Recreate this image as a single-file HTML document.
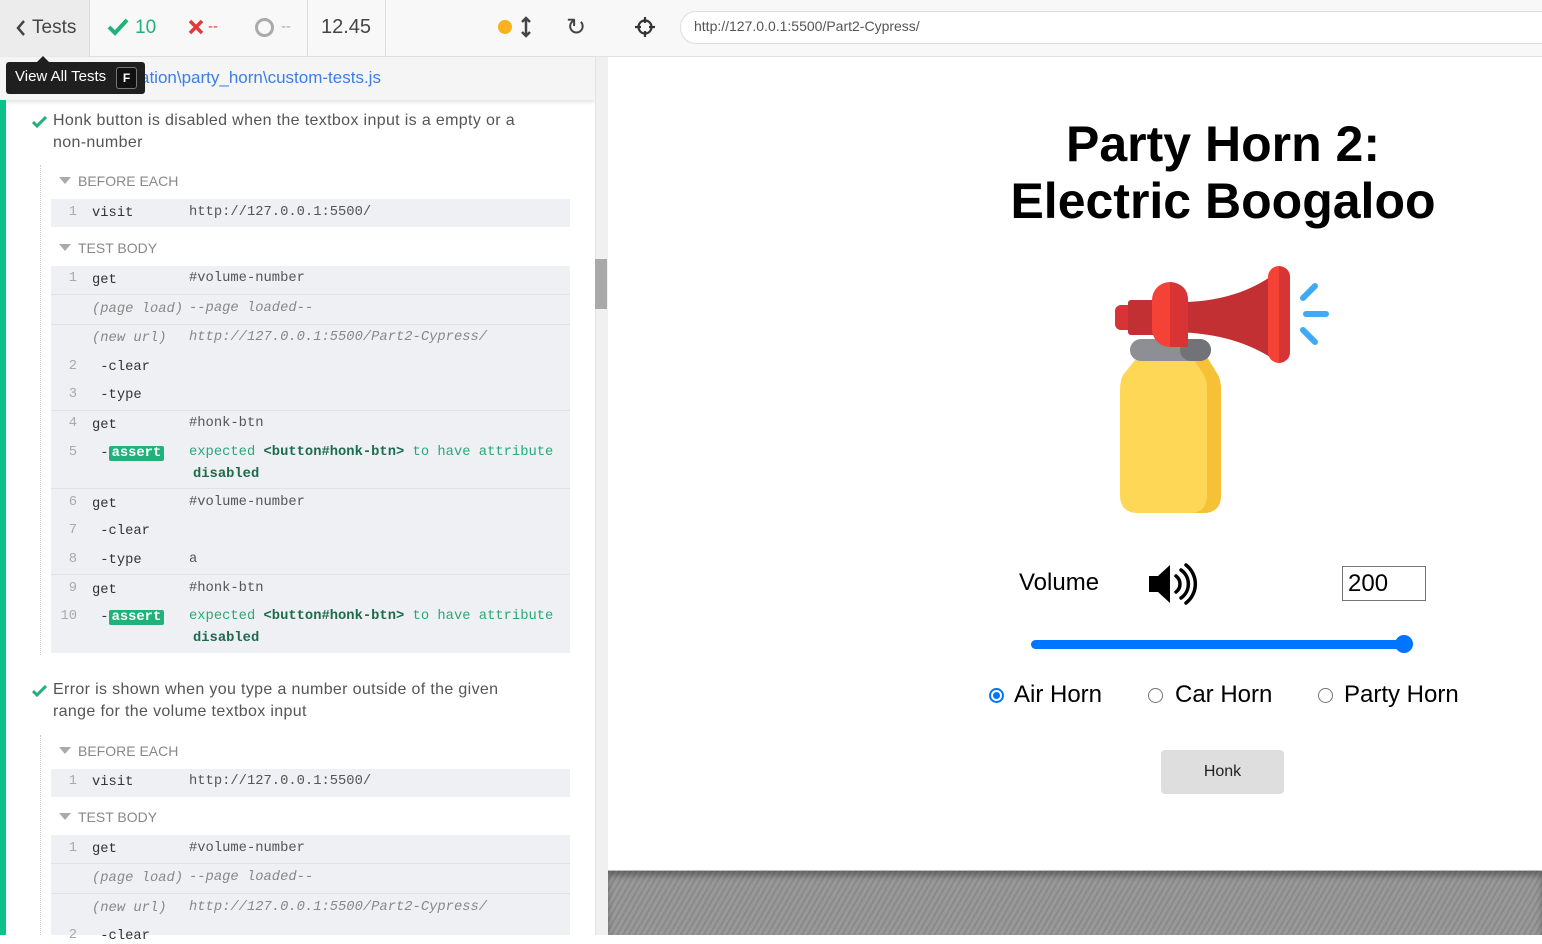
<!DOCTYPE html>
<html><head><meta charset="utf-8"><style>
*{margin:0;padding:0;box-sizing:border-box}
body{width:1542px;height:935px;overflow:hidden;position:relative;background:#fff;font-family:"Liberation Sans",sans-serif}
.a{position:absolute}
.top{left:0;top:0;width:608px;height:57px;background:#f8f8f8;border-bottom:1px solid #e2e2e2}
.mono{font-family:"Liberation Mono","DejaVu Sans Mono",monospace;font-size:13.8px;white-space:nowrap}
.box{left:51px;width:519px;background:#eef0f3}
.sep{left:51px;width:519px;height:1px;background:#dfe2e6}
.n{color:#aaa;width:26px;text-align:right;left:51px}
.c{left:92px;color:#333}
.m{left:189px;color:#555}
.it{font-style:italic;color:#888}
.hd{left:59px;color:#888;font-size:14px}
.hd:before{content:"";display:inline-block;border-left:6px solid transparent;border-right:6px solid transparent;border-top:7px solid #aaa;margin-right:7px;vertical-align:2px}
.as{background:#1fb27a;color:#fff;font-weight:bold;padding:0 3px;border-radius:2px}
.gr{color:#2aa876}
.title{left:53px;color:#555;font-size:16px;letter-spacing:.35px;line-height:22px;white-space:nowrap}
.chk{left:32px}
</style></head><body>
<div class="a top"></div>
<div class="a" style="left:0;top:0;width:90px;height:57px;background:#ececec;border-right:1px solid #ddd"></div>
<svg class="a" style="left:15px;top:19px" width="12" height="18" viewBox="0 0 12 18"><path d="M9 2L3 9l6 7" fill="none" stroke="#444" stroke-width="2.5"/></svg>
<div class="a" style="left:32px;top:17px;font-size:19px;color:#444">Tests</div>
<div class="a" style="left:307px;top:0;width:1px;height:57px;background:#ddd"></div>
<div class="a" style="left:385px;top:0;width:1px;height:57px;background:#ddd"></div>
<svg class="a" style="left:107px;top:18px" width="22" height="18" viewBox="0 0 22 18"><path d="M2 9l6 6L20 2" fill="none" stroke="#1fb27a" stroke-width="4"/></svg>
<div class="a" style="left:135px;top:17px;font-size:19px;color:#1fb27a">10</div>
<svg class="a" style="left:188px;top:19px" width="16" height="16" viewBox="0 0 16 16"><path d="M2 2l12 12M14 2L2 14" stroke="#e03a3a" stroke-width="3.5"/></svg>
<div class="a" style="left:208px;top:18px;color:#e03a3a;font-size:15px">--</div>
<div class="a" style="left:255px;top:18px;width:19px;height:19px;border:3px solid #aaa;border-radius:50%"></div>
<div class="a" style="left:281px;top:18px;color:#aaa;font-size:15px">--</div>
<div class="a" style="left:321px;top:16px;font-size:20px;color:#444">12.45</div>
<div class="a" style="left:498px;top:20px;width:14px;height:14px;border-radius:50%;background:#f9b21e"></div>
<svg class="a" style="left:520px;top:16px" width="12" height="22" viewBox="0 0 12 22"><path d="M6 3v16M2 6l4-4 4 4M2 16l4 4 4-4" fill="none" stroke="#444" stroke-width="2.5"/></svg>
<div class="a" style="left:566px;top:13px;font-size:24px;color:#444">&#8635;</div>
<div class="a" style="left:0;top:57px;width:595px;height:43px;background:#f5f5f5;box-shadow:0 2px 4px rgba(0,0,0,.12)"></div>
<div class="a" style="left:140px;top:68px;color:#3b7ee8;font-size:17px">ation\party_horn\custom-tests.js</div>
<div class="a" style="left:6px;top:62px;width:139px;height:32px;background:#1f1f1f;border-radius:3px"></div>
<div class="a" style="left:37px;top:56px;border-left:6px solid transparent;border-right:6px solid transparent;border-bottom:6px solid #1f1f1f"></div>
<div class="a" style="left:15px;top:68px;color:#fff;font-size:15px">View All Tests</div>
<div class="a" style="left:116px;top:67px;width:21px;height:22px;border:1px solid #777;border-radius:3px;background:#111;color:#fff;font-size:12px;font-weight:bold;text-align:center;line-height:20px">F</div>
<div class="a" style="left:0;top:100px;width:6px;height:835px;background:#0cc28a"></div>
<div class="a" style="left:595px;top:57px;width:13px;height:878px;background:#f0f0f0;border-left:1px solid #e4e4e4"></div>
<div class="a" style="left:595px;top:259px;width:12px;height:50px;background:#a9a9a9"></div>
<div class="a" style="left:40px;top:165px;width:0;height:490px;border-left:1px dotted #ccc"></div>
<div class="a" style="left:40px;top:735px;width:0;height:200px;border-left:1px dotted #ccc"></div>

<svg class="a chk" style="top:116px" width="15" height="12" viewBox="0 0 15 12"><path d="M1 6l4 4 9-9" fill="none" stroke="#1fb27a" stroke-width="3"/></svg>
<div class="a title" style="top:110px">Honk button is disabled when the textbox input is a empty or a<br>non-number</div>
<div class="a hd" style="top:173px">BEFORE EACH</div>
<div class="a box" style="top:199px;height:28px"></div>
<div class="a mono n" style="top:205px">1</div><div class="a mono c" style="top:206px">visit</div><div class="a mono m" style="top:205px">http://127.0.0.1:5500/</div>
<div class="a hd" style="top:240px">TEST BODY</div>
<div class="a box" style="top:266px;height:387px"></div>
<div class="a sep" style="top:294px"></div><div class="a sep" style="top:324px"></div><div class="a sep" style="top:410px"></div><div class="a sep" style="top:488px"></div><div class="a sep" style="top:574px"></div>
<div class="a mono n" style="top:271px">1</div><div class="a mono c" style="top:273px">get</div><div class="a mono m" style="top:271px">#volume-number</div>
<div class="a mono c it" style="top:302px">(page load)</div><div class="a mono m it" style="top:301px">--page loaded--</div>
<div class="a mono c it" style="top:331px">(new url)</div><div class="a mono m it" style="top:330px">http://127.0.0.1:5500/Part2-Cypress/</div>
<div class="a mono n" style="top:359px">2</div><div class="a mono c" style="top:360px">&nbsp;-clear</div>
<div class="a mono n" style="top:387px">3</div><div class="a mono c" style="top:388px">&nbsp;-type</div>
<div class="a mono n" style="top:416px">4</div><div class="a mono c" style="top:418px">get</div><div class="a mono m" style="top:416px">#honk-btn</div>
<div class="a mono n" style="top:445px">5</div><div class="a mono c" style="top:446px">&nbsp;-<span class="as">assert</span></div><div class="a mono m gr" style="top:445px">expected <b style="color:#1d6b4d">&lt;button#honk-btn&gt;</b> to have attribute</div>
<div class="a mono" style="left:193px;top:467px;color:#1d6b4d;font-weight:bold">disabled</div>
<div class="a mono n" style="top:495px">6</div><div class="a mono c" style="top:497px">get</div><div class="a mono m" style="top:495px">#volume-number</div>
<div class="a mono n" style="top:523px">7</div><div class="a mono c" style="top:524px">&nbsp;-clear</div>
<div class="a mono n" style="top:552px">8</div><div class="a mono c" style="top:553px">&nbsp;-type</div><div class="a mono m" style="top:552px">a</div>
<div class="a mono n" style="top:581px">9</div><div class="a mono c" style="top:583px">get</div><div class="a mono m" style="top:581px">#honk-btn</div>
<div class="a mono n" style="top:609px">10</div><div class="a mono c" style="top:610px">&nbsp;-<span class="as">assert</span></div><div class="a mono m gr" style="top:609px">expected <b style="color:#1d6b4d">&lt;button#honk-btn&gt;</b> to have attribute</div>
<div class="a mono" style="left:193px;top:631px;color:#1d6b4d;font-weight:bold">disabled</div>

<svg class="a chk" style="top:685px" width="15" height="12" viewBox="0 0 15 12"><path d="M1 6l4 4 9-9" fill="none" stroke="#1fb27a" stroke-width="3"/></svg>
<div class="a title" style="top:679px">Error is shown when you type a number outside of the given<br>range for the volume textbox input</div>
<div class="a hd" style="top:743px">BEFORE EACH</div>
<div class="a box" style="top:769px;height:28px"></div>
<div class="a mono n" style="top:774px">1</div><div class="a mono c" style="top:775px">visit</div><div class="a mono m" style="top:774px">http://127.0.0.1:5500/</div>
<div class="a hd" style="top:809px">TEST BODY</div>
<div class="a box" style="top:835px;height:100px"></div>
<div class="a sep" style="top:863px"></div><div class="a sep" style="top:893px"></div>
<div class="a mono n" style="top:841px">1</div><div class="a mono c" style="top:842px">get</div><div class="a mono m" style="top:841px">#volume-number</div>
<div class="a mono c it" style="top:871px">(page load)</div><div class="a mono m it" style="top:870px">--page loaded--</div>
<div class="a mono c it" style="top:901px">(new url)</div><div class="a mono m it" style="top:900px">http://127.0.0.1:5500/Part2-Cypress/</div>
<div class="a mono n" style="top:928px">2</div><div class="a mono c" style="top:929px">&nbsp;-clear</div>

<div class="a" style="left:608px;top:0;width:934px;height:57px;background:#f8f8f8;border-bottom:1px solid #e2e2e2"></div>
<svg class="a" style="left:634px;top:16px" width="22" height="22" viewBox="0 0 22 22"><circle cx="11" cy="11" r="6.5" fill="none" stroke="#333" stroke-width="2.2"/><path d="M11 1v6M11 15v6M1 11h6M15 11h6" stroke="#333" stroke-width="2.2"/></svg>
<div class="a" style="left:680px;top:11px;width:880px;height:33px;background:#fff;border:1px solid #ddd;border-radius:16px"></div>
<div class="a" style="left:694px;top:18px;font-size:14px;color:#555">http://127.0.0.1:5500/Part2-Cypress/</div>
<div class="a" style="left:608px;top:871px;width:934px;height:64px;background:repeating-linear-gradient(-60deg,#8a8a8a 0 2px,#999 2px 5px);box-shadow:inset 0 5px 6px rgba(0,0,0,.3)"></div>
<div class="a" style="left:608px;top:870px;width:934px;height:1px;background:#bbb"></div>

<div class="a" style="left:908px;top:116px;width:630px;text-align:center;font-size:50px;font-weight:bold;line-height:57px;color:#000">Party Horn 2:<br>Electric Boogaloo</div>
<svg class="a" style="left:1110px;top:262px" width="225" height="255" viewBox="0 0 225 255">
<path d="M30 92 L95 92 L108 113 Q111 119 111 128 L111 233 Q111 251 93 251 L28 251 Q10 251 10 233 L10 128 Q10 119 13 113 Z" fill="#fed757"/>
<path d="M80 92 L95 92 L108 113 Q111 119 111 128 L111 233 Q111 251 93 251 L80 251 Q97 251 97 233 L97 128 Q97 119 94 113 Z" fill="#f6c137"/>
<rect x="20" y="77" width="81" height="22" rx="11" fill="#8e8e95"/>
<rect x="70" y="77" width="31" height="22" rx="11" fill="#727279"/>
<rect x="5" y="43" width="25" height="25" rx="6" fill="#d83436"/>
<rect x="18" y="38" width="45" height="35" rx="3" fill="#c33033"/>
<path d="M60 40 Q120 42 160 15 L168 15 L168 95 L160 95 Q120 70 60 70 Z" fill="#c33033"/>
<rect x="42" y="20" width="36" height="65" rx="18" fill="#f44336"/>
<path d="M60 20 Q78 22 78 38 L78 85 L60 85 Z" fill="#d83436"/>
<rect x="158" y="4" width="22" height="97" rx="11" fill="#f44336"/>
<path d="M169 4 Q180 6 180 15 L180 90 Q180 99 169 101 Z" fill="#d83436"/>
<path d="M193 36 L205 24 M193 68 L205 80 M196 52 L216 52" stroke="#3fa9f5" stroke-width="6" stroke-linecap="round"/>
</svg>
<div class="a" style="left:1019px;top:569px;font-size:24px;color:#000">Volume</div>
<svg class="a" style="left:1147px;top:562px" width="54" height="44" viewBox="0 0 54 44"><path d="M2 14h9l12-11v38l-12-11H2z" fill="#000"/><path d="M29 14a10 10 0 0 1 0 16M34 8a17 17 0 0 1 0 28M39 3a24 24 0 0 1 0 38" fill="none" stroke="#000" stroke-width="3.5" stroke-linecap="round"/></svg>
<div class="a" style="left:1342px;top:566px;width:84px;height:35px;border:1px solid #767676;font-size:24px;padding-left:5px;line-height:33px">200</div>
<div class="a" style="left:1031px;top:640px;width:374px;height:9px;background:#0075ff;border-radius:5px"></div>
<div class="a" style="left:1395px;top:635px;width:18px;height:18px;background:#0075ff;border-radius:50%"></div>
<div class="a" style="left:989px;top:688px;width:15px;height:15px;border:2px solid #0075ff;border-radius:50%;background:#fff"></div>
<div class="a" style="left:993px;top:692px;width:7px;height:7px;background:#0075ff;border-radius:50%"></div>
<div class="a" style="left:1014px;top:681px;font-size:24px">Air Horn</div>
<div class="a" style="left:1148px;top:688px;width:15px;height:15px;border:1px solid #767676;border-radius:50%"></div>
<div class="a" style="left:1175px;top:681px;font-size:24px">Car Horn</div>
<div class="a" style="left:1318px;top:688px;width:15px;height:15px;border:1px solid #767676;border-radius:50%"></div>
<div class="a" style="left:1344px;top:681px;font-size:24px">Party Horn</div>
<div class="a" style="left:1161px;top:750px;width:123px;height:44px;background:#dedede;border-radius:4px;text-align:center;line-height:44px;font-size:16px;color:#222">Honk</div>
</body></html>
